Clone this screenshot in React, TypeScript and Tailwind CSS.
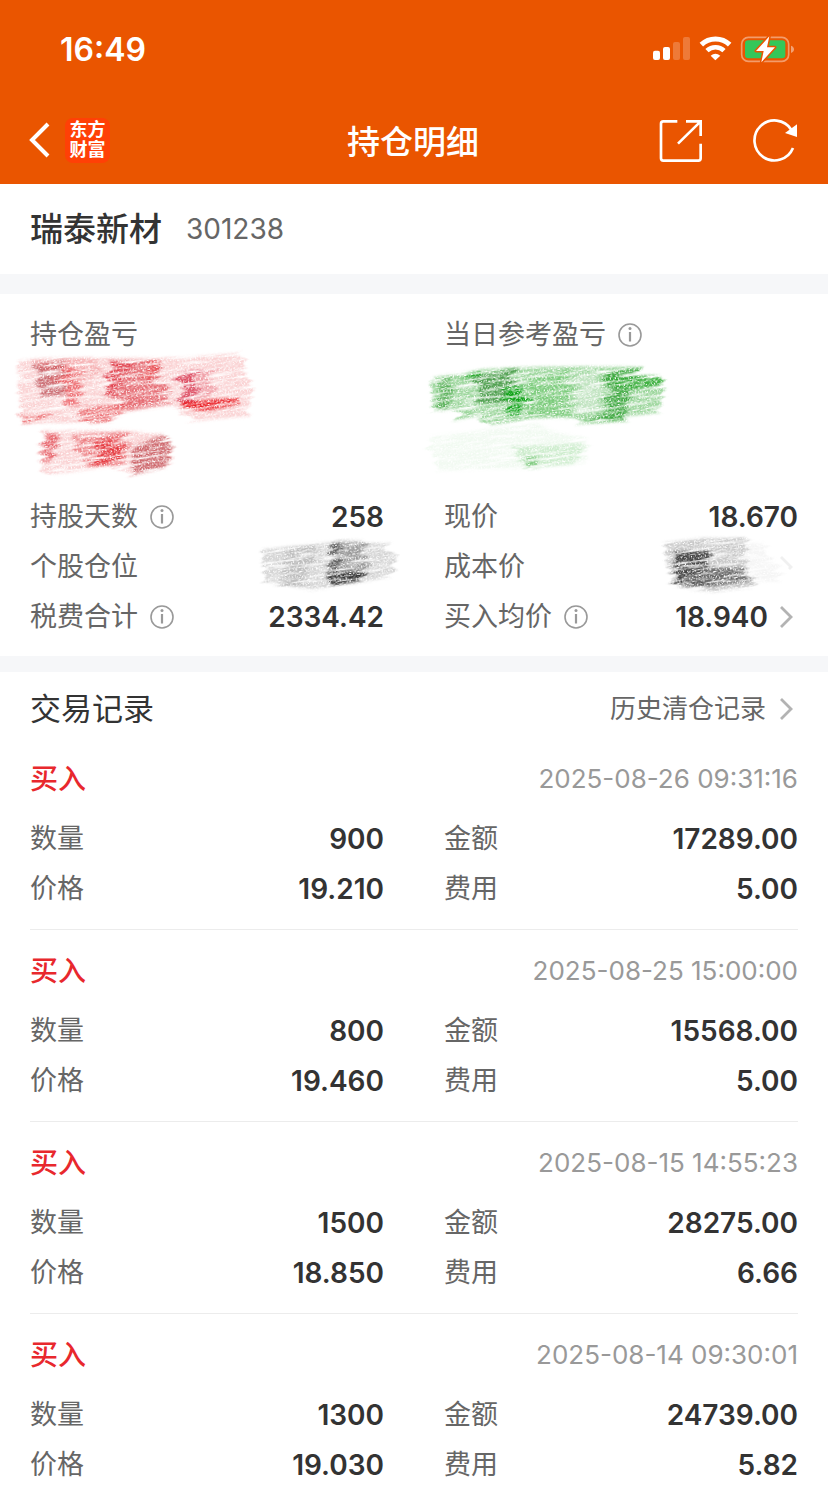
import type { ReactNode } from "react";

type Patch = { d: string; color: string; opacity: number };

const RECORDS = [
  { time: "2025-08-26 09:31:16", count: "900", price: "19.210", amount: "17289.00", fee: "5.00" },
  { time: "2025-08-25 15:00:00", count: "800", price: "19.460", amount: "15568.00", fee: "5.00" },
  { time: "2025-08-15 14:55:23", count: "1500", price: "18.850", amount: "28275.00", fee: "6.66" },
  { time: "2025-08-14 09:30:01", count: "1300", price: "19.030", amount: "24739.00", fee: "5.82" },
];

const RED_PATCHES: Patch[] = [
  { d: "M60 180 L330 172 L540 172 L725 158 L750 270 L745 350 L570 365 L520 318 L380 335 L330 365 L70 370 L55 270Z", color: "#ef6a6c", opacity: 0.3 },
  { d: "M105 190 L200 180 L200 285 L125 290Z", color: "#b8424a", opacity: 0.7 },
  { d: "M190 200 L235 200 L245 310 L195 325Z", color: "#e8363c", opacity: 0.6 },
  { d: "M90 175 L290 172 L290 230 L200 270Z", color: "#e8585c", opacity: 0.3 },
  { d: "M325 182 L470 180 L510 310 L380 332 L325 290Z", color: "#dc3540", opacity: 0.65 },
  { d: "M325 185 L390 180 L350 285 L322 285Z", color: "#dc2636", opacity: 0.65 },
  { d: "M435 182 L470 182 L470 235 L440 235Z", color: "#ee3436", opacity: 0.45 },
  { d: "M235 325 L400 305 L325 368 L265 370Z", color: "#e53b40", opacity: 0.6 },
  { d: "M68 345 L150 345 L100 368 L66 370Z", color: "#e53b40", opacity: 0.8 },
  { d: "M545 215 L590 212 L590 315 L545 320Z", color: "#d52440", opacity: 0.8 },
  { d: "M545 305 L720 294 L710 312 L610 335 L545 320Z", color: "#ea1c22", opacity: 1 },
  { d: "M595 215 L635 210 L635 290 L595 295Z", color: "#df4052", opacity: 0.35 },
  { d: "M125 390 L400 390 L510 400 L520 500 L400 528 L330 500 L150 525 L115 480Z", color: "#ef6a6c", opacity: 0.3 },
  { d: "M130 400 L175 400 L150 485 L122 485Z", color: "#e03842", opacity: 0.7 },
  { d: "M215 405 L400 395 L380 490 L270 500 L225 460Z", color: "#e03038", opacity: 0.5 },
  { d: "M285 420 L375 410 L365 490 L280 498Z", color: "#e42a32", opacity: 0.8 },
  { d: "M400 440 L510 402 L510 500 L400 525Z", color: "#bf444b", opacity: 0.75 },
];

const GREEN_PATCHES: Patch[] = [
  { d: "M65 233 L240 205 L540 200 L690 202 L690 222 L754 228 L750 338 L640 350 L630 368 L510 370 L500 352 L380 355 L240 375 L220 345 L150 360 L140 325 L70 330Z", color: "#4ab54a", opacity: 0.55 },
  { d: "M95 235 L130 232 L125 330 L85 325Z", color: "#3fa33f", opacity: 0.7 },
  { d: "M160 222 L215 216 L205 230 L170 232Z", color: "#0d9e12", opacity: 1 },
  { d: "M205 225 L310 205 L320 315 L205 305Z", color: "#348c34", opacity: 0.75 },
  { d: "M280 260 L345 258 L335 345 L300 345Z", color: "#07a010", opacity: 0.95 },
  { d: "M350 240 L480 210 L480 350 L350 350Z", color: "#3db83d", opacity: 0.35 },
  { d: "M500 220 L570 225 L570 335 L500 340Z", color: "#e4f2e4", opacity: 0.5 },
  { d: "M590 215 L690 208 L650 300 L635 360 L510 366 L590 335Z", color: "#249b27", opacity: 0.8 },
  { d: "M620 230 L752 230 L748 258 L620 275Z", color: "#28a82b", opacity: 0.8 },
  { d: "M60 410 L370 370 L410 380 L530 410 L530 490 L360 505 L80 510Z", color: "#79cf79", opacity: 0.1 },
  { d: "M300 440 L520 430 L500 490 L355 505Z", color: "#5cc45c", opacity: 0.25 },
  { d: "M350 470 L390 470 L385 505 L352 505Z", color: "#2fa82f", opacity: 0.5 },
];

const POSITION_PATCHES: Patch[] = [
  { d: "M790 178 L945 160 L1000 155 L1175 160 L1170 262 L940 300 L870 290 L790 275Z", color: "#666", opacity: 0.28 },
  { d: "M850 175 L945 165 L930 285 L860 285Z", color: "#888", opacity: 0.3 },
  { d: "M992 155 L1100 153 L1090 260 L992 280Z", color: "#444", opacity: 0.4 },
  { d: "M990 160 L1018 158 L1018 285 L990 288Z", color: "#333", opacity: 0.6 },
  { d: "M995 247 L1080 245 L1085 272 L992 288Z", color: "#222", opacity: 0.85 },
];

const COST_PATCHES: Patch[] = [
  { d: "M752 158 L860 145 L990 142 L1000 230 L1025 290 L900 305 L840 300 L765 280Z", color: "#555", opacity: 0.32 },
  { d: "M785 185 L880 182 L880 285 L780 285Z", color: "#222", opacity: 0.8 },
  { d: "M880 232 L990 232 L1020 272 L880 290Z", color: "#333", opacity: 0.65 },
  { d: "M990 160 L1050 160 L1100 275 L1000 275Z", color: "#999", opacity: 0.1 },
];

// Pencil-like smear: ragged stroke ends, long slanted streaks, fine grain on top
function Scribble({ id, patches, viewBox, className }: { id: string; patches: Patch[]; viewBox: string; className: string }) {
  return (
    <svg aria-hidden="true" viewBox={viewBox} className={className}>
      <filter id={id} x="-10%" y="-25%" width="120%" height="150%" colorInterpolationFilters="sRGB">
        <feGaussianBlur in="SourceGraphic" stdDeviation="4" result="soft" />
        <feTurbulence type="fractalNoise" baseFrequency="0.004 0.05" numOctaves="2" seed="4" />
        <feColorMatrix values="1 0 0 0 0  0 0 0 0 0.5  0 0 1 0 0  0 0 0 0 1" result="ends" />
        <feDisplacementMap in="soft" in2="ends" scale="90" xChannelSelector="R" yChannelSelector="G" result="ragged" />
        <feTurbulence type="fractalNoise" baseFrequency="0.012 0.12" numOctaves="2" seed="7" />
        <feColorMatrix values="0 0 0 0 0  0 0 0 0 0  0 0 0 0 0  3 0 0 0 -0.55" result="streaks" />
        <feTurbulence type="fractalNoise" baseFrequency="0.2 0.3" numOctaves="2" seed="9" />
        <feColorMatrix values="0 0 0 0 0  0 0 0 0 0  0 0 0 0 0  4 0 0 0 -1.1" result="grain" />
        <feComposite in="ragged" in2="streaks" operator="in" />
        <feComposite in2="grain" operator="in" />
      </filter>
      <g transform="rotate(-8)">
        <g filter={`url(#${id})`}>
          <g transform="rotate(8)">
            {patches.map((p) => (
              <path key={p.d} d={p.d} fill={p.color} fillOpacity={p.opacity} />
            ))}
          </g>
        </g>
      </g>
    </svg>
  );
}

function InfoButton({ label }: { label: string }) {
  return (
    <button type="button" aria-label={label} className="text-[#999]">
      <svg viewBox="0 0 24 24" className="size-6" fill="none" stroke="currentColor">
        <circle cx="12" cy="12" r="11" strokeWidth="1.6" />
        <path d="M12 9v9.500" strokeWidth="2.2" />
        <circle cx="12" cy="5.500" r="1.500" fill="currentColor" stroke="none" />
      </svg>
    </button>
  );
}

function Chevron({ faint = false }: { faint?: boolean }) {
  return (
    <svg
      aria-hidden="true"
      viewBox="0 0 24 24"
      className={faint ? "size-6 text-[#f0f0f0]" : "size-6 text-[#b3b3b3]"}
      fill="none"
      stroke="currentColor"
      strokeWidth="2.8"
    >
      <path d={faint ? "M7 2l10 10l-2 2" : "M7 2l10 10L7 22"} />
    </svg>
  );
}

function Row({ label, info = false, children }: { label: string; info?: boolean; children: ReactNode }) {
  return (
    <div className="relative flex h-[50px] items-center justify-between">
      <dt className="flex items-center gap-3 text-[27px] text-[#666]">
        {label}
        {info && <InfoButton label={`${label}说明`} />}
      </dt>
      <dd className="flex items-center gap-1.5 font-semibold text-[#333]">{children}</dd>
    </div>
  );
}

function StatusBar() {
  return (
    <div className="flex h-[100px] items-center justify-between pr-[33px] pl-[60px]">
      <span className="text-[32px] font-semibold">16:49</span>
      <div className="flex items-center gap-2 pb-1">
        <svg aria-hidden="true" viewBox="156 108 117 78" className="h-[26px] w-[39px]" fill="white">
          <rect x="159" y="155" width="21" height="28" rx="6" />
          <rect x="189" y="144" width="21" height="39" rx="6" />
          <rect x="219" y="129" width="21" height="54" rx="6" fillOpacity="0.22" />
          <rect x="249" y="114" width="21" height="69" rx="6" fillOpacity="0.22" />
        </svg>
        <svg aria-hidden="true" viewBox="297 108 99 78" className="h-[26px] w-[33px]" fill="none" stroke="white">
          <path d="M304 137A61 61 0 0 1 389 137" strokeWidth="15" />
          <path d="M321 155A37 37 0 0 1 372 155" strokeWidth="14" />
          <path d="M332 170Q346 158 361 170L346 184Z" fill="white" stroke="none" />
        </svg>
        <svg aria-hidden="true" viewBox="420 102 165 87" className="h-[29px] w-[55px]">
          <rect x="425" y="112" width="141" height="72" rx="20" fill="none" stroke="white" strokeOpacity="0.42" strokeWidth="5" />
          <rect x="435" y="121" width="121" height="54" rx="10" fill="#34c759" />
          <path
            d="M508 109L468 153H491L484 187L525 142H501Z"
            fill="white"
            stroke="#ea5500"
            strokeWidth="9"
            strokeLinejoin="round"
            paintOrder="stroke"
          />
          <path d="M573 137q9 3 9 11t-9 11z" fill="white" fillOpacity="0.45" />
        </svg>
      </div>
    </div>
  );
}

function NavBar() {
  return (
    <div className="grid h-[84px] grid-cols-[1fr_auto_1fr] items-center pr-[30px] pl-7">
      <div className="flex items-center gap-[15px] pb-1">
        <button type="button" aria-label="返回">
          <svg viewBox="0 0 22 36" className="h-9 w-[22px]" fill="none" stroke="white" strokeWidth="4">
            <path d="M20 2L4 18L20 34" />
          </svg>
        </button>
        <span className="grid size-[45px] place-content-center rounded-lg bg-[#ff4006] text-center text-lg leading-5 font-bold">
          <span>东方</span>
          <span>财富</span>
        </span>
      </div>
      <h1 className="text-[33px] font-medium">持仓明细</h1>
      <div className="flex items-center justify-end gap-[50px] pb-1">
        <button type="button" aria-label="分享">
          <svg viewBox="177 354 132 135" className="h-[45px] w-11" fill="none" stroke="white" strokeWidth="8">
            <path d="M232 364H190Q183 364 183 371V475Q183 482 190 482H295Q302 482 302 475V431" />
            <path d="M258 364H302V408M234 431L302 364" />
          </svg>
        </button>
        <button type="button" aria-label="刷新">
          <svg viewBox="459 351 135 138" className="h-[46px] w-[45px]" fill="none" stroke="white" strokeWidth="8">
            <path d="M579 444A60 60 0 1 1 574 389" />
            <path d="M591 373V411L555 399Z" fill="white" stroke="none" />
          </svg>
        </button>
      </div>
    </div>
  );
}

export default function App() {
  return (
    <main className="min-h-screen w-full bg-white font-['Inter','Noto_Sans_CJK_SC',sans-serif] text-[28px] leading-10 text-[#333]">
      <header className="bg-[#ea5500] text-white">
        <StatusBar />
        <NavBar />
      </header>

      <section className="flex h-[90px] items-center gap-6 px-[30px]">
        <h2 className="text-[33px] font-medium">瑞泰新材</h2>
        <span className="text-[#666]">301238</span>
      </section>

      <section className="border-t-[20px] border-b-[16px] border-[#f6f7f9] px-[30px] pt-4 pb-3.5">
        <dl className="grid grid-cols-2 gap-x-[60px]">
          <div className="h-[182px]">
            <Row label="持仓盈亏">
              <Scribble
                id="scribble-profit"
                patches={RED_PATCHES}
                viewBox="0 147 840 420"
                className="absolute top-[39px] -left-[30px] h-[140px] w-[280px]"
              />
            </Row>
          </div>
          <div className="h-[182px]">
            <Row label="当日参考盈亏" info>
              <Scribble
                id="scribble-today"
                patches={GREEN_PATCHES}
                viewBox="0 147 840 420"
                className="absolute top-[39px] -left-[34px] h-[140px] w-[280px]"
              />
            </Row>
          </div>
          <Row label="持股天数" info>
            258
          </Row>
          <Row label="现价">18.670</Row>
          <Row label="个股仓位">
            <Scribble
              id="scribble-position"
              patches={POSITION_PATCHES}
              viewBox="750 135 450 180"
              className="absolute -top-[7px] -right-4 h-[60px] w-[150px]"
            />
          </Row>
          <Row label="成本价">
            <Scribble
              id="scribble-cost"
              patches={COST_PATCHES}
              viewBox="720 135 450 180"
              className="absolute -top-[7px] -right-1.5 h-[60px] w-[150px]"
            />
            <Chevron faint />
          </Row>
          <Row label="税费合计" info>
            2334.42
          </Row>
          <Row label="买入均价" info>
            18.940
            <Chevron />
          </Row>
        </dl>
      </section>

      <section className="px-[30px]">
        <div className="flex h-[66px] items-center justify-between pt-2">
          <h2 className="text-[31px]">交易记录</h2>
          <a href="#history" className="flex items-center gap-2 text-[26px] text-[#666]">
            历史清仓记录
            <Chevron />
          </a>
        </div>
        <ul>
          {RECORDS.map((r) => (
            <li key={r.time} className="border-b border-[#ececec] pt-[11px] pb-[15px] last:border-b-0 last:pb-3">
              <div className="mb-[5px] flex h-[60px] items-center justify-between">
                <h3 className="font-medium text-[#e8282d]">买入</h3>
                <time className="text-[26px] text-[#999]">{r.time}</time>
              </div>
              <dl className="grid grid-cols-2 gap-x-[60px]">
                <Row label="数量">{r.count}</Row>
                <Row label="金额">{r.amount}</Row>
                <Row label="价格">{r.price}</Row>
                <Row label="费用">{r.fee}</Row>
              </dl>
            </li>
          ))}
        </ul>
      </section>
    </main>
  );
}
